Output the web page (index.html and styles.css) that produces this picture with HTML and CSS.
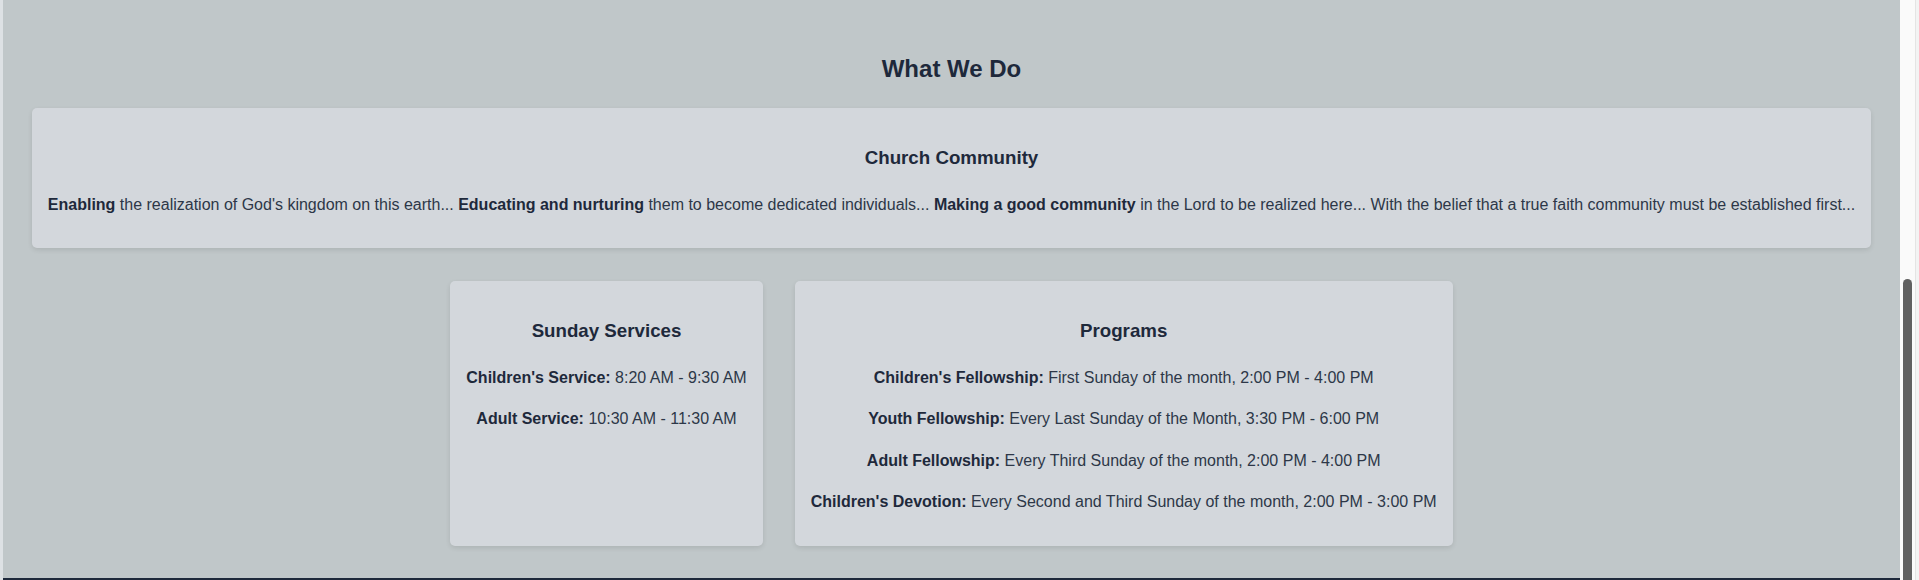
FILE: index.html
```html
<!DOCTYPE html>
<html lang="en">
<head>
<meta charset="utf-8">
<title>What We Do</title>
<link rel="stylesheet" href="styles.css">
</head>
<body>
<div class="frame">
  <div class="viewport">
    <section class="what-we-do">
      <h2 class="section-title">What We Do</h2>
      <div class="card card-wide">
        <h3 class="card-title">Church Community</h3>
        <p class="card-text"><strong>Enabling</strong> the realization of God's kingdom on this earth... <strong>Educating and nurturing</strong> them to become dedicated individuals... <strong>Making a good community</strong> in the Lord to be realized here... With the belief that a true faith community must be established first...</p>
      </div>
      <div class="card-row">
        <div class="card">
          <h3 class="card-title">Sunday Services</h3>
          <p class="card-text"><strong>Children's Service:</strong> 8:20 AM - 9:30 AM</p>
          <p class="card-text"><strong>Adult Service:</strong> 10:30 AM - 11:30 AM</p>
        </div>
        <div class="card">
          <h3 class="card-title">Programs</h3>
          <p class="card-text"><strong>Children's Fellowship:</strong> First Sunday of the month, 2:00 PM - 4:00 PM</p>
          <p class="card-text"><strong>Youth Fellowship:</strong> Every Last Sunday of the Month, 3:30 PM - 6:00 PM</p>
          <p class="card-text"><strong>Adult Fellowship:</strong> Every Third Sunday of the month, 2:00 PM - 4:00 PM</p>
          <p class="card-text"><strong>Children's Devotion:</strong> Every Second and Third Sunday of the month, 2:00 PM - 3:00 PM</p>
        </div>
      </div>
    </section>
    <footer class="footer"></footer>
  </div>
  <div class="scrollbar">
    <div class="scroll-thumb"></div>
  </div>
  <div class="scroll-edge"></div>
</div>
</body>
</html>
```
FILE: styles.css
```css
html, body {
  margin: 0;
  padding: 0;
  height: 100%;
  overflow: hidden;
}

body {
  font-family: "Liberation Sans", Arial, sans-serif;
  line-height: 1.6;
  color: #1e293b;
  background: #f4f4f4;
}

.frame {
  display: flex;
  height: 580px;
  width: 1919px;
}

.viewport {
  width: 1897px;
  height: 580px;
  flex: none;
  border-left: 3px solid #dde1e4;
  background: #c0c7c9;
  overflow: hidden;
  display: flex;
  flex-direction: column;
}

.what-we-do {
  flex: none;
  padding: 30px 29px 0;
  height: 578px;
  box-sizing: border-box;
  text-align: center;
}

.section-title {
  font-size: 24px;
  font-weight: bold;
  margin: 19.92px 0;
  color: #1e293b;
}

.card {
  background: #d3d7dc;
  border-radius: 5px;
  padding: 16px;
  box-shadow: 0 2px 5px rgba(0, 0, 0, 0.1);
}

.card-wide {
  padding: 16px 6px 15px;
}

.card-title {
  font-size: 18.72px;
  font-weight: bold;
  margin: 18.72px 0;
  color: #1e293b;
}

.card-text {
  font-size: 16px;
  margin: 16px 0;
  color: #2d3748;
}

.card-text strong {
  color: #1e293b;
}

.card-row {
  display: flex;
  justify-content: center;
  gap: 32px;
  margin-top: 33px;
}

.card-row .card {
  padding: 16px 16px 15px;
}

.footer {
  flex: 1;
  background: #1e293b;
}

.scrollbar {
  width: 15px;
  flex: none;
  background: #fafafa;
  display: flex;
  flex-direction: column;
  padding: 279px 0 0 3px;
  box-sizing: border-box;
}

.scroll-thumb {
  width: 9px;
  flex: 1;
  background: #606060;
  border-radius: 5px 5px 0 0;
}

.scroll-edge {
  width: 3px;
  flex: none;
  border-left: 1px solid #e4e4e4;
  background: #f3f3f3;
}
```
